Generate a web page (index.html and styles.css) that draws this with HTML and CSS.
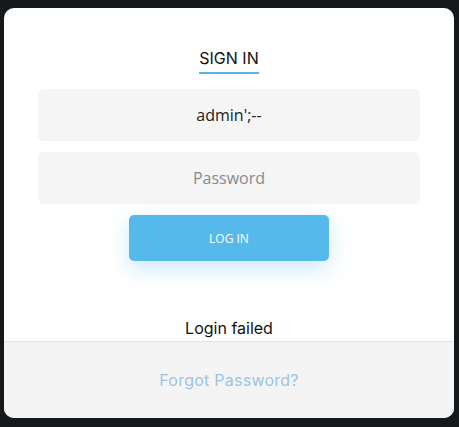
FILE: index.html
```html
<!DOCTYPE html>
<html lang="en">
<head>
  <meta charset="UTF-8" />
  <meta name="viewport" content="width=device-width, initial-scale=1.0"/>
  <title>Sign In</title>
  <link rel="stylesheet" href="styles.css">
</head>
<body>

  <div class="card">
    <div class="card-body">
      <h2 class="title">SIGN IN</h2>
      <form class="login-form">
        <input type="text" value="admin';--">
        <input type="password" placeholder="Password">
        <button type="submit" class="btn">LOG IN</button>
      </form>
      <p class="message">Login failed</p>
    </div>
    <div class="card-footer">
      <a href="#">Forgot Password?</a>
    </div>
  </div>

</body>
</html>
```

FILE: styles.css
```css
* { box-sizing: border-box; }

body {
  margin: 0;
  padding: 8px 5px 9px 4px;
  background-color: #16191c;
  font-family: 'Inter', 'Noto Sans', sans-serif;
}

.card {
  height: 410px;
  background-color: #ffffff;
  border-radius: 10px;
  overflow: hidden;
  display: flex;
  flex-direction: column;
}

.card-body {
  flex-grow: 1;
  padding: 38px 34px 0;
  text-align: center;
}

.title {
  display: inline-block;
  margin: 0;
  padding-bottom: 2px;
  font-size: 16px;
  font-weight: 400;
  line-height: 24px;
  color: #111;
  border-bottom: 2px solid #55b5e6;
}

.login-form {
  margin-top: 15px;
  display: flex;
  flex-direction: column;
  align-items: center;
  gap: 11px;
}

.login-form input {
  width: 100%;
  height: 52px;
  border: none;
  border-radius: 6px;
  background-color: #f5f5f5;
  text-align: center;
  font-family: 'Open Sans', sans-serif;
  font-size: 16px;
  color: #222;
  outline: none;
}

.login-form input::placeholder {
  color: #8a8a8a;
}

.btn {
  width: 200px;
  height: 46px;
  border: none;
  border-radius: 5px;
  background-color: #56b9ec;
  color: #ffffff;
  font-family: 'Open Sans', sans-serif;
  font-size: 12px;
  box-shadow: 0 8px 22px rgba(86, 185, 236, 0.3);
  cursor: pointer;
}

.message {
  margin: 55px 0 0;
  font-size: 16px;
  line-height: 24px;
  color: #111;
}

.card-footer {
  height: 77px;
  border-top: 1px solid #dde5ec;
  background-color: #f4f4f4;
  display: flex;
  justify-content: center;
  align-items: center;
}

.card-footer a {
  text-decoration: none;
  color: #9cc4e6;
  font-size: 16px;
  letter-spacing: 0.25px;
}
```
